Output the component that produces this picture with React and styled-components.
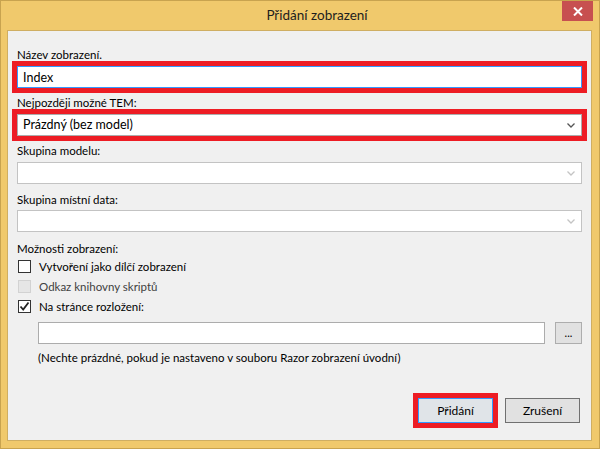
import React from 'react';
import styled, { createGlobalStyle } from 'styled-components';

const GlobalStyle = createGlobalStyle`
  html, body {
    margin: 0;
    padding: 0;
    background: #f0c96c;
  }
  * {
    box-sizing: border-box;
  }
`;

const Window = styled.div`
  width: 600px;
  height: 449px;
  display: flex;
  flex-direction: column;
  background: #f0c96c;
  border: 1px solid #c8a34f;
  font-family: Lato, "Liberation Sans", sans-serif;
  font-size: 11.5px;
  color: #000;
`;

const TitleBar = styled.div`
  height: 29px;
  display: flex;
  align-items: flex-start;
  margin-right: 6px;
`;

const Title = styled.div`
  flex: 1;
  height: 29px;
  line-height: 29px;
  padding-left: 71px;
  text-align: center;
  font-size: 13.5px;
  color: #1e1e1e;
`;

const CloseButton = styled.div`
  width: 31px;
  height: 20px;
  background: #c75050;
  display: flex;
  align-items: center;
  justify-content: center;
`;

const Client = styled.div`
  flex: 1;
  margin: 0 7px 7px 6px;
  background: #f0f0f0;
  border: 1px solid #cfae62;
  padding: 18px 9px 12px 9px;
  display: flex;
  flex-direction: column;
`;

const FieldLabel = styled.div`
  height: 12px;
  line-height: 12px;
  margin-top: ${(p) => p.$top || 0}px;
  margin-bottom: ${(p) => p.$bottom || 0}px;
  white-space: nowrap;
`;

const Highlight = styled.div`
  margin: 0 -5px;
  border: 5px solid #ed1c24;
`;

const TextBox = styled.div`
  height: 22px;
  background: #fff;
  border: 1px solid ${(p) => (p.$focused ? '#3399ff' : '#acacac')};
  padding-left: 5px;
  display: flex;
  align-items: center;
  font-size: 12.5px;
  flex: ${(p) => (p.$grow ? 1 : 'none')};
`;

const Select = styled.div`
  height: 22px;
  background: #fff;
  border: 1px solid ${(p) => (p.$disabled ? '#c3c3c3' : '#acacac')};
  padding: 0 6px 0 5px;
  display: flex;
  align-items: center;
  justify-content: space-between;
`;

const SelectValue = styled.span`
  line-height: 20px;
  font-size: 12.5px;
`;

const OptionsGroup = styled.div`
  margin-top: 1px;
  display: flex;
  flex-direction: column;
`;

const CheckRow = styled.label`
  height: 20px;
  display: flex;
  align-items: center;
  gap: 8px;
  padding-left: 1px;
  color: ${(p) => (p.$disabled ? '#404040' : '#000')};
`;

const CheckBox = styled.span`
  width: 13px;
  height: 13px;
  border: 1px solid ${(p) => (p.$disabled ? '#d2d2d2' : '#333')};
  background: ${(p) => (p.$disabled ? '#e6e6e6' : '#fff')};
  display: flex;
  align-items: center;
  justify-content: center;
`;

const LayoutRow = styled.div`
  margin-top: 6px;
  margin-left: 21px;
  display: flex;
  gap: 10px;
`;

const SmallButton = styled.button`
  width: 27px;
  height: 22px;
  padding: 0;
  border: 1px solid #adadad;
  background: #e1e1e1;
  font-family: inherit;
  font-size: 11px;
  line-height: 12px;
  color: #000;
`;

const Note = styled.div`
  margin: 7px 0 0 21px;
  line-height: 14px;
  white-space: nowrap;
`;

const Spacer = styled.div`
  flex: 1;
`;

const ButtonBar = styled.div`
  display: flex;
  justify-content: flex-end;
  align-items: center;
  gap: 7px;
  padding-right: 2px;
`;

const ButtonHighlight = styled.div`
  border: 5px solid #ed1c24;
`;

const DialogButton = styled.button`
  width: 75px;
  height: 25px;
  padding: 0;
  background: ${(p) => (p.$primary ? '#e0e4e8' : '#e1e1e1')};
  border: 1px solid ${(p) => (p.$primary ? '#3399ff' : '#707070')};
  font-family: inherit;
  font-size: 12px;
  color: #000;
  display: block;
`;

const Chevron = ({ color }) => (
  <svg width="8" height="5" viewBox="0 0 8 5">
    <polyline points="0.5,0.5 4,4 7.5,0.5" fill="none" stroke={color} strokeWidth="1.3" />
  </svg>
);

const CheckMark = () => (
  <svg width="11" height="11" viewBox="0 0 11 11">
    <polyline points="1.5,5.5 4.2,8.5 9.5,1.5" fill="none" stroke="#222" strokeWidth="1.8" />
  </svg>
);

const CloseIcon = () => (
  <svg width="10" height="9" viewBox="0 0 10 9">
    <path d="M1 0.5 L9 8.5 M9 0.5 L1 8.5" stroke="#fff" strokeWidth="2" />
  </svg>
);

const App = () => (
  <>
    <GlobalStyle />
    <Window>
      <TitleBar>
        <Title>Přidání zobrazení</Title>
        <CloseButton>
          <CloseIcon />
        </CloseButton>
      </TitleBar>
      <Client>
        <FieldLabel>Název zobrazení.</FieldLabel>
        <Highlight>
          <TextBox $focused>Index</TextBox>
        </Highlight>

        <FieldLabel $top={4}>Nejpozději možné TEM:</FieldLabel>
        <Highlight>
          <Select>
            <SelectValue>Prázdný (bez model)</SelectValue>
            <Chevron color="#555" />
          </Select>
        </Highlight>

        <FieldLabel $top={4} $bottom={5}>Skupina modelu:</FieldLabel>
        <Select $disabled>
          <span />
          <Chevron color="#c4c4c4" />
        </Select>

        <FieldLabel $top={10} $bottom={4}>Skupina místní data:</FieldLabel>
        <Select $disabled>
          <span />
          <Chevron color="#c4c4c4" />
        </Select>

        <FieldLabel $top={11}>Možnosti zobrazení:</FieldLabel>
        <OptionsGroup>
          <CheckRow>
            <CheckBox />
            Vytvoření jako dílčí zobrazení
          </CheckRow>
          <CheckRow $disabled>
            <CheckBox $disabled />
            Odkaz knihovny skriptů
          </CheckRow>
          <CheckRow>
            <CheckBox>
              <CheckMark />
            </CheckBox>
            Na stránce rozložení:
          </CheckRow>
        </OptionsGroup>

        <LayoutRow>
          <TextBox $grow />
          <SmallButton>...</SmallButton>
        </LayoutRow>
        <Note>(Nechte prázdné, pokud je nastaveno v souboru Razor zobrazení úvodní)</Note>

        <Spacer />
        <ButtonBar>
          <ButtonHighlight>
            <DialogButton $primary>Přidání</DialogButton>
          </ButtonHighlight>
          <DialogButton>Zrušení</DialogButton>
        </ButtonBar>
      </Client>
    </Window>
  </>
);

export default App;
